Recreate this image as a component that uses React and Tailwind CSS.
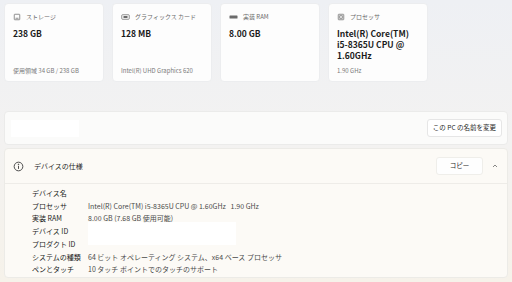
import React from 'react';

const font = { fontFamily: '"Noto Sans CJK JP", "Noto Sans", sans-serif' };

function StorageIcon() {
  return (
    <svg width="8" height="8" viewBox="0 0 16 16" fill="none" stroke="#6b6b6b" strokeWidth="1.5">
      <rect x="2.5" y="2.5" width="11" height="11" rx="1" />
      <line x1="5" y1="10.5" x2="11" y2="10.5" />
    </svg>
  );
}

function GpuIcon() {
  return (
    <svg width="9" height="8" viewBox="0 0 18 16" fill="none" stroke="#6b6b6b" strokeWidth="1.5">
      <rect x="1.5" y="3.5" width="15" height="9" rx="1.5" />
      <rect x="5" y="6" width="8" height="4" fill="#6b6b6b" stroke="none" />
    </svg>
  );
}

function RamIcon() {
  return (
    <svg width="9" height="8" viewBox="0 0 18 16" fill="#6b6b6b">
      <rect x="1" y="5" width="16" height="6" rx="1" />
    </svg>
  );
}

function CpuIcon() {
  return (
    <svg width="8" height="8" viewBox="0 0 16 16" fill="none" stroke="#6b6b6b" strokeWidth="1.5">
      <rect x="2.5" y="2.5" width="11" height="11" rx="1" />
      <rect x="5.5" y="5.5" width="5" height="5" />
    </svg>
  );
}

function Card({ icon, title, children, footer }) {
  return (
    <div className="w-[100px] h-[79px] rounded-[4px] bg-[#fdfdfd] border border-[#ecedef] px-[8px] pt-[8px] pb-[6px] flex flex-col">
      <div className="flex items-center gap-[5px] text-[6px] text-[#6a6a6a] leading-[9px]">
        {icon}
        <span>{title}</span>
      </div>
      <div className="mt-[7px] text-[8.5px] font-bold text-[#1b1b1b] leading-[11px]">{children}</div>
      <div className="mt-auto text-[6px] text-[#7a7a7a] leading-[8px]">{footer}</div>
    </div>
  );
}

const specs = [
  ['デバイス名', ''],
  ['プロセッサ', 'Intel(R) Core(TM) i5-8365U CPU @ 1.60GHz   1.90 GHz'],
  ['実装 RAM', '8.00 GB (7.68 GB 使用可能)'],
  ['デバイス ID', ''],
  ['プロダクト ID', ''],
  ['システムの種類', '64 ビット オペレーティング システム、x64 ベース プロセッサ'],
  ['ペンとタッチ', '10 タッチ ポイントでのタッチのサポート'],
];

export default function App() {
  return (
    <div
      style={font}
      className="w-[512px] h-[282px] overflow-hidden bg-gradient-to-b from-[#eef0f4] via-[#f3f2f1] to-[#f6f2ea] px-[4px] pt-[3px]"
    >
      <div className="flex gap-[8px]">
        <Card icon={<StorageIcon />} title="ストレージ" footer="使用領域 34 GB / 238 GB">238 GB</Card>
        <Card icon={<GpuIcon />} title="グラフィックス カード" footer="Intel(R) UHD Graphics 620">128 MB</Card>
        <Card icon={<RamIcon />} title="実装 RAM" footer="">8.00 GB</Card>
        <Card icon={<CpuIcon />} title="プロセッサ" footer="1.90 GHz">
          Intel(R) Core(TM)<br />i5-8365U CPU @<br />1.60GHz
        </Card>
      </div>

      <div className="mt-[29px] w-[504px] h-[34px] rounded-[4px] bg-[#fbfbfa] border border-[#ebebea] flex items-center justify-between pl-[6px] pr-[5px]">
        <div className="w-[68px] h-[17px] bg-white" />
        <button className="h-[18px] px-[5px] bg-white border border-[#e6e6e6] rounded-[3px] text-[6.5px] text-[#1f1f1f]">
          この PC の名前を変更
        </button>
      </div>

      <div className="mt-[3px] w-[504px] h-[130px] rounded-[4px] bg-[#fcfaf6] border border-[#ecebe7]">
        <div className="h-[35px] flex items-center pl-[8px] pr-[8px] border-b border-[#eeece8]">
          <svg width="11" height="11" viewBox="0 0 16 16" fill="none" stroke="#3a3a3a" strokeWidth="1.3">
            <circle cx="8" cy="8" r="6.3" />
            <line x1="8" y1="7" x2="8" y2="11.5" />
            <circle cx="8" cy="4.8" r="0.5" fill="#3a3a3a" />
          </svg>
          <span className="ml-[10px] text-[7px] text-[#1f1f1f]">デバイスの仕様</span>
          <button className="ml-auto w-[47px] h-[18px] bg-[#fefefe] border border-[#efeeea] rounded-[3px] text-[6.5px] text-[#1f1f1f]">
            コピー
          </button>
          <svg className="ml-[8px]" width="8" height="8" viewBox="0 0 16 16" fill="none" stroke="#555" strokeWidth="1.4">
            <polyline points="4,10 8,6 12,10" />
          </svg>
        </div>
        <div className="relative pl-[27px] pt-[3px]">
          <div className="absolute left-[83px] top-[38px] w-[148px] h-[23px] bg-white" />
          {specs.map(([k, v]) => (
            <div key={k} className="relative flex h-[12.7px] items-center text-[7px]">
              <span className="w-[56px] text-[#1a1a1a]">{k}</span>
              <span className="text-[#4a4a4a]" style={{ whiteSpace: 'pre' }}>{v}</span>
            </div>
          ))}
        </div>
      </div>
    </div>
  );
}
